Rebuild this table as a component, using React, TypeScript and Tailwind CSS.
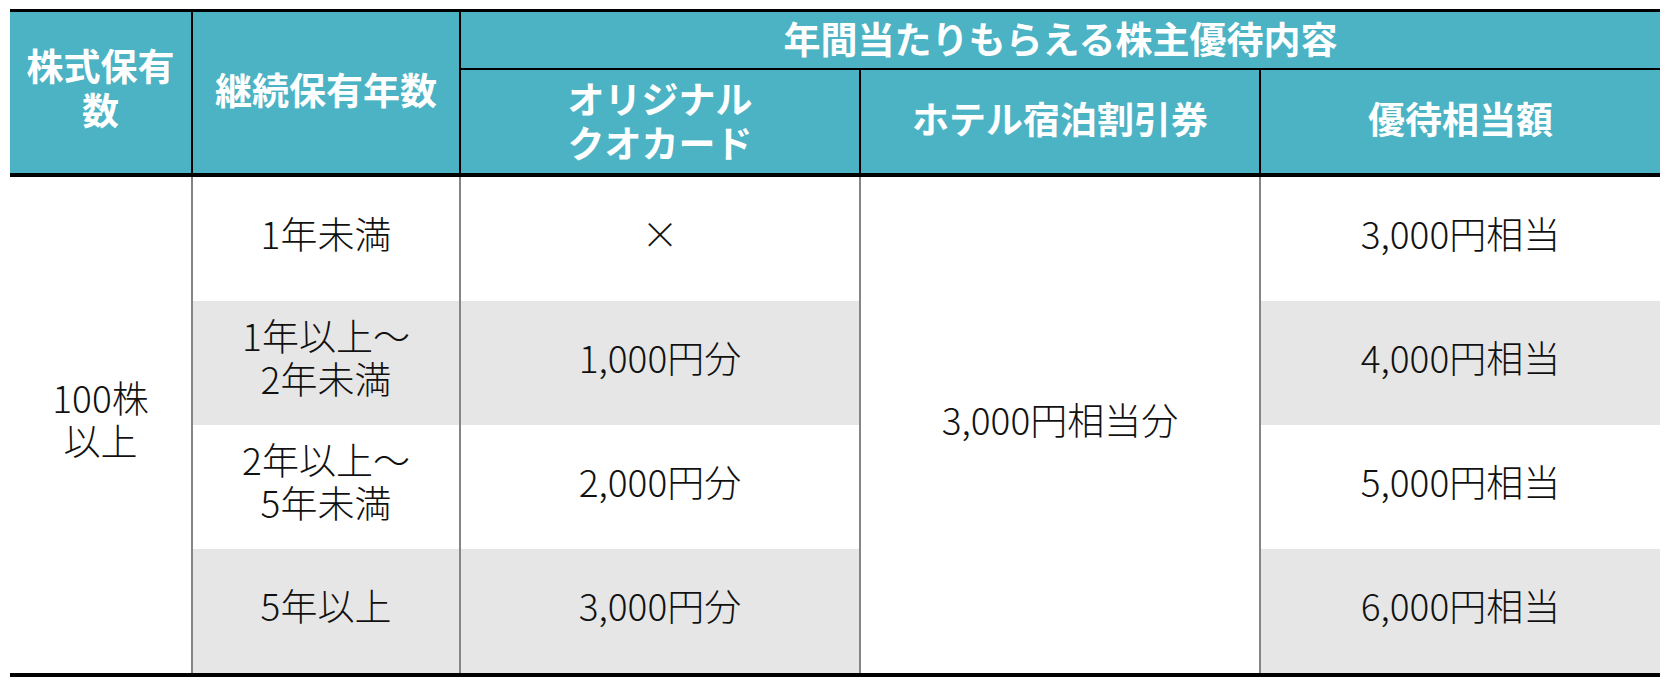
import React from "react"

const font = { fontFamily: '"Noto Sans CJK JP", "Noto Sans", sans-serif' }

type Row = { years: string[]; card: string; total: string; shaded: boolean }

const rows: Row[] = [
  { years: ["1年未満"], card: "×", total: "3,000円相当", shaded: false },
  { years: ["1年以上～", "2年未満"], card: "1,000円分", total: "4,000円相当", shaded: true },
  { years: ["2年以上～", "5年未満"], card: "2,000円分", total: "5,000円相当", shaded: false },
  { years: ["5年以上"], card: "3,000円分", total: "6,000円相当", shaded: true },
]

const rowStart = ["row-start-1", "row-start-2", "row-start-3", "row-start-4"]

function Lines({ lines }: { lines: string[] }) {
  return (
    <div className="flex flex-col items-center">
      {lines.map((l) => (
        <span key={l}>{l}</span>
      ))}
    </div>
  )
}

export default function App() {
  return (
    <div className="min-h-screen bg-white pt-[9px] pl-[10px]" style={font}>
      <div className="w-[1650px] border-t-[3px] border-b-4 border-black">
        {/* header */}
        <div className="grid grid-cols-[181px_268px_400px_400px_401px] grid-rows-[58px_103px] bg-[#4bb3c4] text-[37px] font-bold leading-[44px] text-white">
          <div className="col-start-1 row-span-2 row-start-1 flex items-center justify-center pb-3 text-center">
            <Lines lines={["株式保有", "数"]} />
          </div>
          <div className="col-start-2 row-span-2 row-start-1 flex items-center justify-center border-l-2 border-black pb-2">
            継続保有年数
          </div>
          <div className="col-span-3 col-start-3 row-start-1 flex items-center justify-center border-b-2 border-l-2 border-black pb-1">
            年間当たりもらえる株主優待内容
          </div>
          <div className="col-start-3 row-start-2 flex items-center justify-center border-l-2 border-black pb-1">
            <Lines lines={["オリジナル", "クオカード"]} />
          </div>
          <div className="col-start-4 row-start-2 flex items-center justify-center border-l-2 border-black pb-2">
            ホテル宿泊割引券
          </div>
          <div className="col-start-5 row-start-2 flex items-center justify-center border-l-2 border-black pb-2">
            優待相当額
          </div>
        </div>
        <div className="h-1 bg-black" />
        {/* body */}
        <div className="grid grid-cols-[181px_268px_400px_400px_401px] grid-rows-[124px_124px_124px_124px] text-[37px] font-light leading-[43px] text-[#111]">
          <div className="col-start-1 row-span-4 row-start-1 flex items-center justify-center pb-3">
            <Lines lines={["100株", "以上"]} />
          </div>
          {rows.map((r, i) => (
            <React.Fragment key={i}>
              <div
                className={`col-start-2 ${rowStart[i]} flex items-center justify-center border-l-2 border-[#858585] pb-3 ${r.shaded ? "bg-[#e6e6e6]" : "bg-white"}`}
              >
                <Lines lines={r.years} />
              </div>
              <div
                className={`col-start-3 ${rowStart[i]} flex items-center justify-center border-l-2 border-[#858585] pb-3 ${r.shaded ? "bg-[#e6e6e6]" : "bg-white"}`}
              >
                {r.card}
              </div>
              <div
                className={`col-start-5 ${rowStart[i]} flex items-center justify-center border-l-2 border-[#858585] pb-3 ${r.shaded ? "bg-[#e6e6e6]" : "bg-white"}`}
              >
                {r.total}
              </div>
            </React.Fragment>
          ))}
          <div className="col-start-4 row-span-4 row-start-1 flex items-center justify-center border-l-2 border-[#858585] pb-3">
            3,000円相当分
          </div>
        </div>
      </div>
    </div>
  )
}
